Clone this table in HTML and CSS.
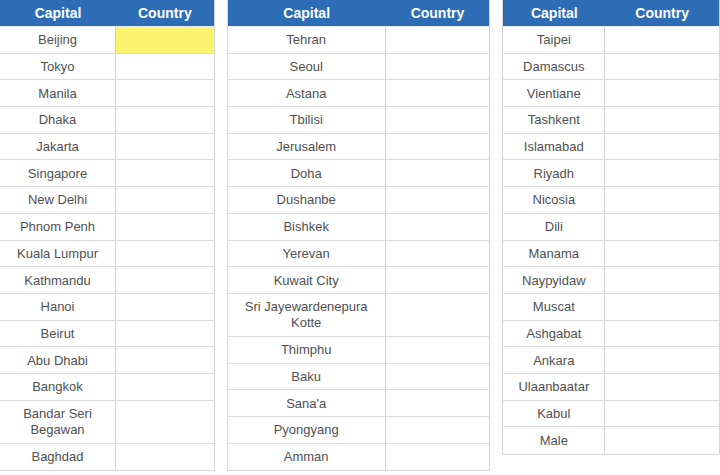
FILE: index.html
```html
<!DOCTYPE html>
<html>
<head>
<meta charset="utf-8">
<link rel="stylesheet" href="styles.css">
</head>
<body>
<div class="page">
  <div class="tbl t1">
    <div class="row head"><div class="c">Capital</div><div class="c">Country</div></div>
    <div class="row"><div class="c">Beijing</div><div class="c hl"></div></div>
    <div class="row"><div class="c">Tokyo</div><div class="c"></div></div>
    <div class="row"><div class="c">Manila</div><div class="c"></div></div>
    <div class="row"><div class="c">Dhaka</div><div class="c"></div></div>
    <div class="row"><div class="c">Jakarta</div><div class="c"></div></div>
    <div class="row"><div class="c">Singapore</div><div class="c"></div></div>
    <div class="row"><div class="c">New Delhi</div><div class="c"></div></div>
    <div class="row"><div class="c">Phnom Penh</div><div class="c"></div></div>
    <div class="row"><div class="c">Kuala Lumpur</div><div class="c"></div></div>
    <div class="row"><div class="c">Kathmandu</div><div class="c"></div></div>
    <div class="row"><div class="c">Hanoi</div><div class="c"></div></div>
    <div class="row"><div class="c">Beirut</div><div class="c"></div></div>
    <div class="row"><div class="c">Abu Dhabi</div><div class="c"></div></div>
    <div class="row"><div class="c">Bangkok</div><div class="c"></div></div>
    <div class="row dbl"><div class="c">Bandar Seri<br>Begawan</div><div class="c"></div></div>
    <div class="row"><div class="c">Baghdad</div><div class="c"></div></div>
  </div>
  <div class="tbl t2">
    <div class="row head"><div class="c">Capital</div><div class="c">Country</div></div>
    <div class="row"><div class="c">Tehran</div><div class="c"></div></div>
    <div class="row"><div class="c">Seoul</div><div class="c"></div></div>
    <div class="row"><div class="c">Astana</div><div class="c"></div></div>
    <div class="row"><div class="c">Tbilisi</div><div class="c"></div></div>
    <div class="row"><div class="c">Jerusalem</div><div class="c"></div></div>
    <div class="row"><div class="c">Doha</div><div class="c"></div></div>
    <div class="row"><div class="c">Dushanbe</div><div class="c"></div></div>
    <div class="row"><div class="c">Bishkek</div><div class="c"></div></div>
    <div class="row"><div class="c">Yerevan</div><div class="c"></div></div>
    <div class="row"><div class="c">Kuwait City</div><div class="c"></div></div>
    <div class="row dbl"><div class="c">Sri Jayewardenepura<br>Kotte</div><div class="c"></div></div>
    <div class="row"><div class="c">Thimphu</div><div class="c"></div></div>
    <div class="row"><div class="c">Baku</div><div class="c"></div></div>
    <div class="row"><div class="c">Sana'a</div><div class="c"></div></div>
    <div class="row"><div class="c">Pyongyang</div><div class="c"></div></div>
    <div class="row"><div class="c">Amman</div><div class="c"></div></div>
  </div>
  <div class="tbl t3">
    <div class="row head"><div class="c">Capital</div><div class="c">Country</div></div>
    <div class="row"><div class="c">Taipei</div><div class="c"></div></div>
    <div class="row"><div class="c">Damascus</div><div class="c"></div></div>
    <div class="row"><div class="c">Vientiane</div><div class="c"></div></div>
    <div class="row"><div class="c">Tashkent</div><div class="c"></div></div>
    <div class="row"><div class="c">Islamabad</div><div class="c"></div></div>
    <div class="row"><div class="c">Riyadh</div><div class="c"></div></div>
    <div class="row"><div class="c">Nicosia</div><div class="c"></div></div>
    <div class="row"><div class="c">Dili</div><div class="c"></div></div>
    <div class="row"><div class="c">Manama</div><div class="c"></div></div>
    <div class="row"><div class="c">Naypyidaw</div><div class="c"></div></div>
    <div class="row"><div class="c">Muscat</div><div class="c"></div></div>
    <div class="row"><div class="c">Ashgabat</div><div class="c"></div></div>
    <div class="row"><div class="c">Ankara</div><div class="c"></div></div>
    <div class="row"><div class="c">Ulaanbaatar</div><div class="c"></div></div>
    <div class="row"><div class="c">Kabul</div><div class="c"></div></div>
    <div class="row"><div class="c">Male</div><div class="c"></div></div>
  </div>
</div>
</body>
</html>
```
FILE: styles.css
```css
html, body {
  margin: 0;
  padding: 0;
  background: #ffffff;
}
.page {
  display: flex;
  align-items: flex-start;
  gap: 12px;
  width: 720px;
  font-family: "Liberation Sans", Arial, sans-serif;
}
.tbl {
  display: flex;
  flex-direction: column;
  border: 1px solid #d6d6d6;
  border-top: none;
  box-sizing: border-box;
}
.t1 { width: 216px; margin-left: -1px; }
.t2 { width: 264px; }
.t3 { width: 218px; }
.row {
  display: grid;
  height: 26.7px;
  box-sizing: border-box;
  border-bottom: 1px solid #dcdcdc;
}
.row:last-child { border-bottom: none; }
.t1 .row { grid-template-columns: 116px 1fr; }
.t2 .row { grid-template-columns: 158px 1fr; }
.t3 .row { grid-template-columns: 102px 1fr; }
.row.dbl { height: 43px; }
.c {
  display: flex;
  align-items: center;
  justify-content: center;
  text-align: center;
  font-size: 13px;
  line-height: 16px;
  color: #505050;
  padding-top: 1px;
}
.c:first-child { border-right: 1px solid #d0d0d0; }
.row.head {
  height: 27px;
  background: #2d6db5;
  border-bottom: 1px solid #e8eef6;
}
.row.head .c {
  color: #ffffff;
  font-weight: bold;
  font-size: 14px;
  border-right: none;
  padding-top: 0;
}
.hl { background: #fcf46e; }
```
